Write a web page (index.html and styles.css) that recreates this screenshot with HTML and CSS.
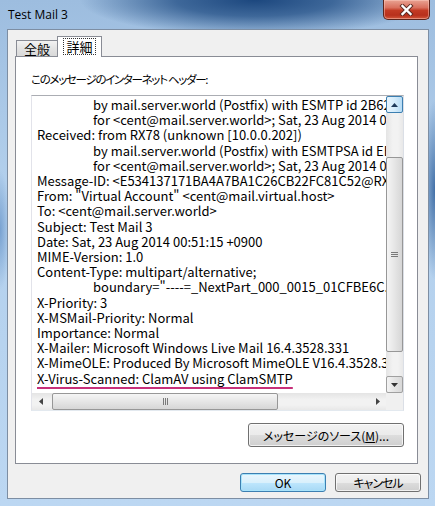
FILE: index.html
```html
<!DOCTYPE html>
<html lang="ja">
<head>
    <meta charset="UTF-8">
    <meta name="viewport" content="width=device-width, initial-scale=1.0">
    <title>Test Mail 3</title>
    <link rel="stylesheet" href="styles.css">
</head>
<body>
    <div class="window">
        <div class="titlebar">
            <span class="title">Test Mail 3</span>
            <div class="close">
                <svg width="15" height="12" viewBox="0 0 15 12">
                    <path d="M3.5 2 L11.5 10 M11.5 2 L3.5 10" stroke="#5a2a22" stroke-width="4.2" stroke-linecap="square"/>
                    <path d="M3.5 2 L11.5 10 M11.5 2 L3.5 10" stroke="#fff" stroke-width="2.4" stroke-linecap="square"/>
                </svg>
            </div>
        </div>

        <div class="client">
            <div class="tabs">
                <div class="tab">全般</div>
                <div class="tab active"><span class="focus">詳細</span></div>
            </div>

            <div class="panel">
                <div class="caption">このメッセージのインターネット ヘッダー:</div>

                <div class="textbox">
                    <div class="headers">
                        <div class="line indent">by mail.server.world (Postfix) with ESMTP id 2B62A1A0C4F</div>
                        <div class="line indent">for &lt;cent@mail.server.world&gt;; Sat, 23 Aug 2014 00:51:16 +0900</div>
                        <div class="line">Received: from RX78 (unknown [10.0.0.202])</div>
                        <div class="line indent">by mail.server.world (Postfix) with ESMTPSA id EB1F21A0C4E</div>
                        <div class="line indent">for &lt;cent@mail.server.world&gt;; Sat, 23 Aug 2014 00:51:15 +0900</div>
                        <div class="line">Message-ID: &lt;E534137171BA4A7BA1C26CB22FC81C52@RX78&gt;</div>
                        <div class="line">From: "Virtual Account" &lt;cent@mail.virtual.host&gt;</div>
                        <div class="line">To: &lt;cent@mail.server.world&gt;</div>
                        <div class="line">Subject: Test Mail 3</div>
                        <div class="line">Date: Sat, 23 Aug 2014 00:51:15 +0900</div>
                        <div class="line">MIME-Version: 1.0</div>
                        <div class="line">Content-Type: multipart/alternative;</div>
                        <div class="line indent">boundary="----=_NextPart_000_0015_01CFBE6C.8E3A2E70"</div>
                        <div class="line">X-Priority: 3</div>
                        <div class="line">X-MSMail-Priority: Normal</div>
                        <div class="line">Importance: Normal</div>
                        <div class="line">X-Mailer: Microsoft Windows Live Mail 16.4.3528.331</div>
                        <div class="line">X-MimeOLE: Produced By Microsoft MimeOLE V16.4.3528.331</div>
                        <div class="line"><span class="mark">X-Virus-Scanned: ClamAV using ClamSMTP</span></div>
                    </div>

                    <div class="vscroll">
                        <div class="sb-btn hover">
                            <svg width="7" height="4" viewBox="0 0 7 4"><path d="M0 4 L3.5 0 L7 4 Z" fill="#1e3a5a"/></svg>
                        </div>
                        <div class="track">
                            <div class="thumb v">
                                <svg width="7" height="5" viewBox="0 0 7 5"><path d="M0 0.5 H7 M0 2.5 H7 M0 4.5 H7" stroke="#7a7a7a" stroke-width="1"/></svg>
                            </div>
                        </div>
                        <div class="sb-btn">
                            <svg width="7" height="4" viewBox="0 0 7 4"><path d="M0 0 L3.5 4 L7 0 Z" fill="#333"/></svg>
                        </div>
                    </div>

                    <div class="hscroll">
                        <div class="sb-flat">
                            <svg width="4" height="7" viewBox="0 0 4 7"><path d="M4 0 L0 3.5 L4 7 Z" fill="#444"/></svg>
                        </div>
                        <div class="track h">
                            <div class="thumb h">
                                <svg width="5" height="7" viewBox="0 0 5 7"><path d="M0.5 0 V7 M2.5 0 V7 M4.5 0 V7" stroke="#7a7a7a" stroke-width="1"/></svg>
                            </div>
                        </div>
                        <div class="sb-flat">
                            <svg width="4" height="7" viewBox="0 0 4 7"><path d="M0 0 L4 3.5 L0 7 Z" fill="#444"/></svg>
                        </div>
                    </div>

                    <div class="corner"></div>
                </div>

                <div class="source-row">
                    <button class="btn source">メッセージのソース(<u>M</u>)...</button>
                </div>
            </div>

            <div class="dialog-buttons">
                <button class="btn default">OK</button>
                <button class="btn cancel">キャンセル</button>
            </div>
        </div>
    </div>
</body>
</html>
```

FILE: styles.css
```css
body {
    margin: 0;
    font-family: "Noto Sans CJK JP", "Noto Sans", sans-serif;
    background: #1b2a3a;
}
.window {
    width: 435px;
    height: 506px;
    box-sizing: border-box;
    padding: 0 6px 0 7px;
    display: flex;
    flex-direction: column;
    overflow: hidden;
    background:
        radial-gradient(ellipse 175px 36px at 255px 0px, #1c477e 0%, rgba(38, 82, 136, 0.8) 45%, rgba(150, 188, 226, 0) 100%),
        radial-gradient(ellipse 14px 90px at 435px 190px, rgba(38, 88, 150, 0.8), rgba(38, 88, 150, 0)),
        radial-gradient(ellipse 10px 60px at 0px 230px, rgba(80, 130, 190, 0.6), rgba(80, 130, 190, 0)),
        linear-gradient(to bottom, #9dbddf 0%, #b2cfec 35%, #bcd7f2 100%);
}
.titlebar {
    height: 29px;
    display: flex;
    justify-content: space-between;
    align-items: flex-start;
}
.title {
    font-family: "Open Sans", "Noto Sans", sans-serif;
    font-size: 12px;
    line-height: 16px;
    margin: 7px 0 0 1px;
    color: #000;
}
.close {
    width: 47px;
    height: 20px;
    box-sizing: border-box;
    margin-right: -1px;
    border: 1px solid #5b241c;
    border-top: none;
    border-radius: 0 0 5px 5px;
    display: flex;
    align-items: center;
    justify-content: center;
    background: linear-gradient(to bottom, #e9a393 0%, #d9705e 40%, #c23a24 55%, #b8301c 80%, #d2583c 100%);
    box-shadow: inset 0 0 0 1px rgba(255, 210, 200, 0.45);
}
.client {
    height: 470px;
    box-sizing: border-box;
    border: 1px solid #7d8ea3;
    background: #f0f0f0;
    display: flex;
    flex-direction: column;
}
.tabs {
    display: flex;
    align-items: flex-end;
    padding: 6px 0 0 8px;
    margin-bottom: -1px;
    height: 21px;
}
.tab {
    height: 16px;
    width: 42px;
    box-sizing: border-box;
    margin-bottom: 1px;
    border: 1px solid #898c95;
    border-bottom: none;
    background: linear-gradient(to bottom, #f2f2f2, #e3e3e3 50%, #d9d9d9);
    font-size: 13px;
    line-height: 15px;
    text-align: center;
    color: #000;
}
.tab.active {
    position: relative;
    z-index: 1;
    height: 21px;
    width: 45px;
    margin: 0 0 0 -1px;
    background: #fff;
    padding-top: 2px;
}
.focus {
    display: inline-block;
    outline: 1px dotted #333;
    outline-offset: 0;
    line-height: 15px;
    padding: 0 2px;
}
.panel {
    margin: 0 10px 0 7px;
    border: 1px solid #898c95;
    background: #fff;
    padding: 14px 13px 16px 15px;
}
.caption {
    font-size: 11.5px;
    line-height: 16px;
    font-feature-settings: "palt";
    letter-spacing: -1.3px;
    color: #000;
}
.textbox {
    margin-top: 8px;
    height: 316px;
    box-sizing: border-box;
    border: 1px solid #abadb3;
    border-color: #abadb3 #dbdfe6 #e3e9ef #e2e3ea;
    display: grid;
    grid-template-columns: 1fr 17px;
    grid-template-rows: 1fr 17px;
    background: #fff;
}
.headers {
    overflow: hidden;
    padding: 1px 0 0 5px;
    font-size: 13px;
    line-height: 15.2px;
    color: #000;
}
.line {
    white-space: pre;
}
.indent {
    padding-left: 56px;
}
.mark {
    text-decoration: underline;
    text-decoration-color: #c7307a;
    text-decoration-thickness: 2px;
    text-underline-offset: 3px;
    text-decoration-skip-ink: none;
}
.vscroll {
    display: flex;
    flex-direction: column;
    background: linear-gradient(to right, #e4e4e4, #f2f2f2 40%, #f2f2f2 70%, #e8e8e8);
}
.hscroll {
    display: flex;
    background: linear-gradient(to bottom, #e4e4e4, #f2f2f2 40%, #f2f2f2 70%, #e8e8e8);
}
.corner {
    background: #f0f0f0;
}
.sb-btn {
    height: 17px;
    box-sizing: border-box;
    border: 1px solid #a0a0a0;
    border-radius: 2px;
    background: linear-gradient(to right, #f4f4f4, #e4e4e4 50%, #d8d8d8);
    display: flex;
    align-items: center;
    justify-content: center;
}
.sb-btn.hover {
    border-color: #3c7fb1;
    background: linear-gradient(to right, #e8f5fd, #d5ecfb 50%, #b7dcf5);
}
.sb-flat {
    width: 17px;
    display: flex;
    align-items: center;
    justify-content: center;
}
.track {
    flex: 1;
    padding: 44px 0 0 0;
}
.track.h {
    padding: 0 0 0 3px;
}
.thumb {
    box-sizing: border-box;
    border: 1px solid #979797;
    border-radius: 2px;
    display: flex;
    align-items: center;
    justify-content: center;
}
.thumb.v {
    height: 195px;
    background: linear-gradient(to right, #f5f5f5, #e6e6e6 50%, #d6d6d6);
}
.thumb.h {
    width: 226px;
    height: 17px;
    background: linear-gradient(to bottom, #f5f5f5, #e6e6e6 50%, #d6d6d6);
}
.source-row {
    display: flex;
    justify-content: flex-end;
    margin-top: 12px;
}
.btn {
    height: 24px;
    box-sizing: border-box;
    border: 1px solid #707070;
    border-radius: 3px;
    padding: 0;
    background: linear-gradient(to bottom, #f2f2f2 0%, #ebebeb 50%, #dddddd 51%, #cfcfcf 100%);
    box-shadow: inset 0 0 0 1px rgba(255, 255, 255, 0.7);
    font-family: "Noto Sans CJK JP", "Noto Sans", sans-serif;
    font-size: 12px;
    font-feature-settings: "palt";
    color: #000;
}
.btn.source {
    width: 156px;
}
.dialog-buttons {
    display: flex;
    justify-content: flex-end;
    gap: 9px;
    margin-top: 9px;
    padding-right: 7px;
}
.dialog-buttons .btn {
    width: 86px;
    height: 19px;
    line-height: 15px;
}
.btn.cancel {
    letter-spacing: -1px;
}
.btn.default {
    border-color: #3c7fb1;
    background: linear-gradient(to bottom, #eaf6fd 0%, #d9f0fc 50%, #bee6fd 51%, #a7d9f5 100%);
    box-shadow: inset 0 0 0 1px #a7e3fb;
}
```
